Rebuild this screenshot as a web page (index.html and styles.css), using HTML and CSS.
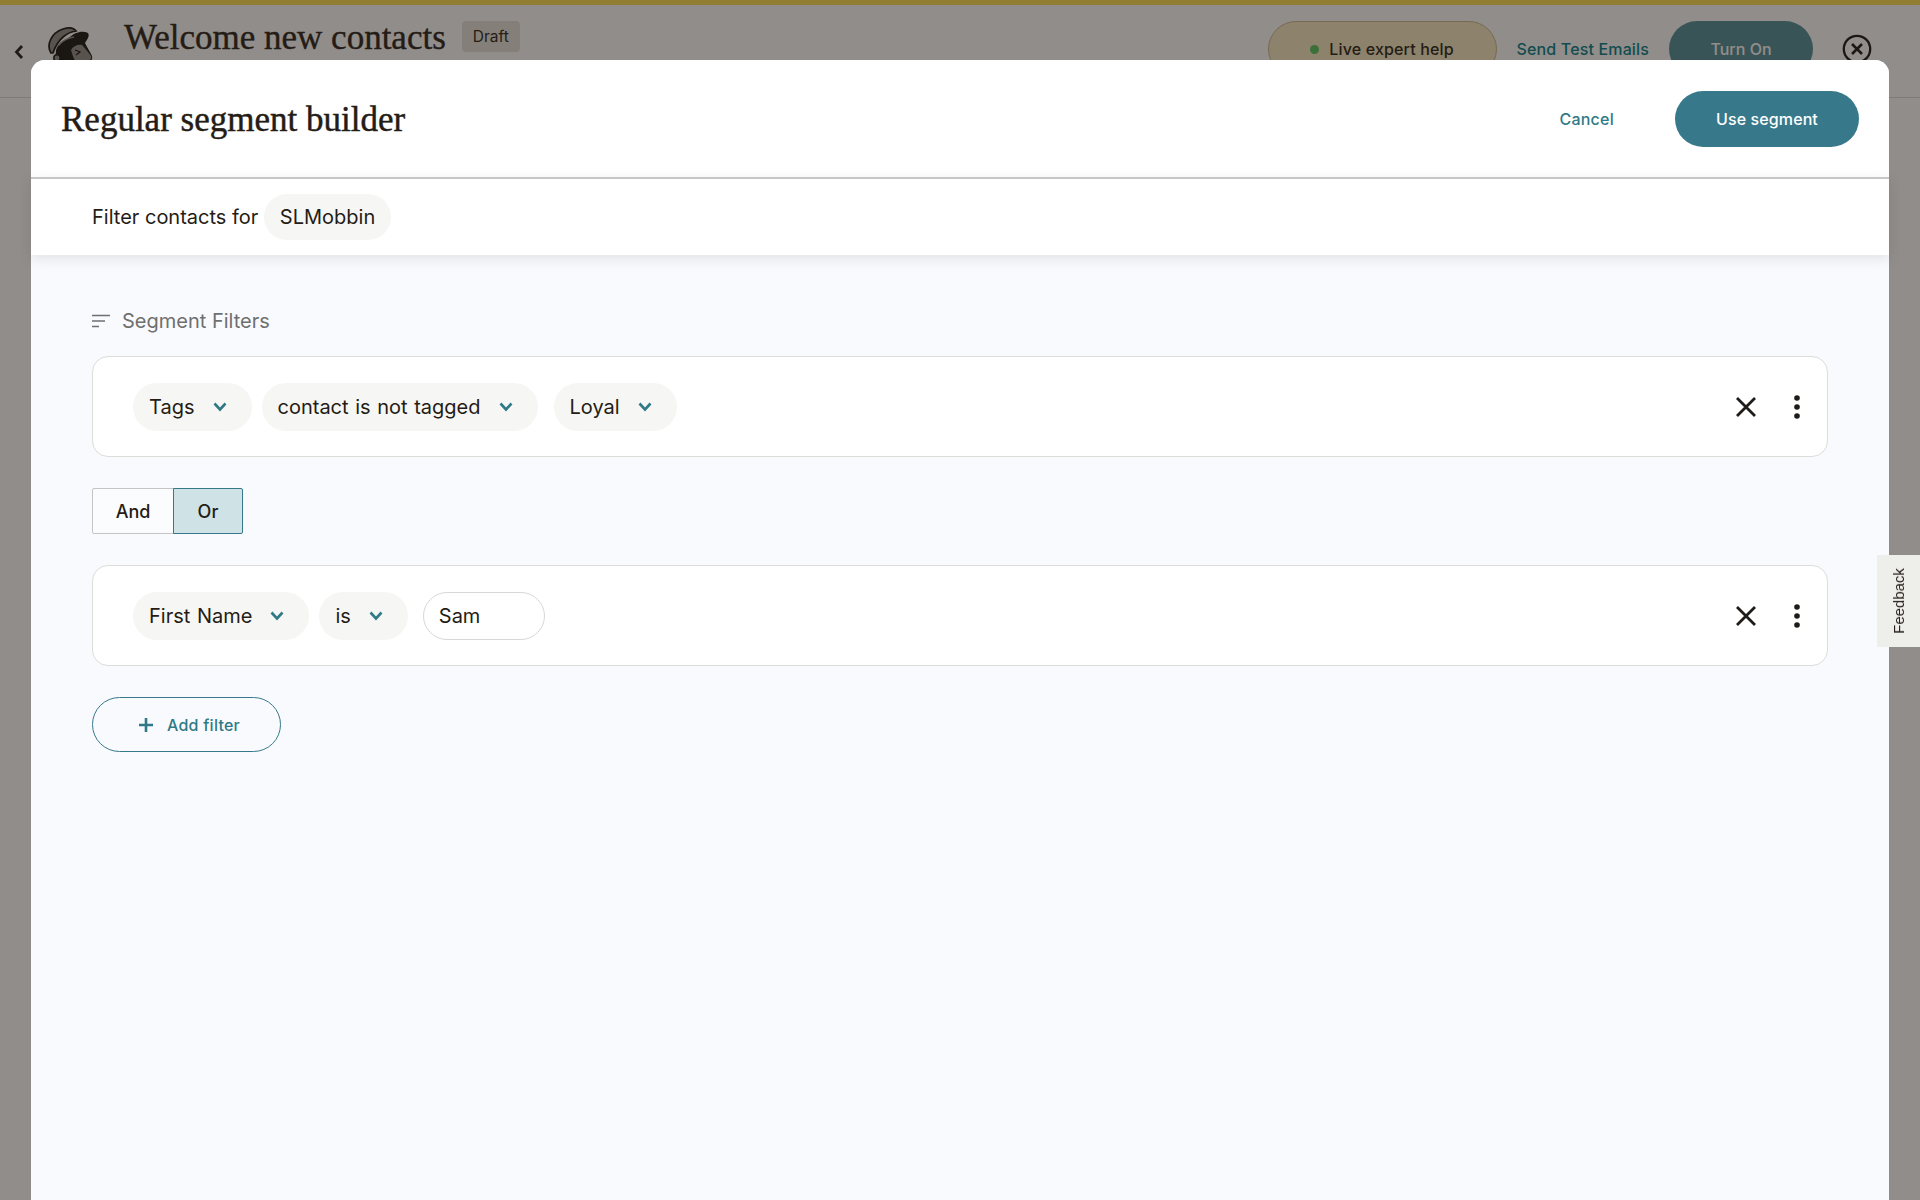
FILE: index.html
```html
<!DOCTYPE html>
<html lang="en">
<head>
<meta charset="utf-8">
<title>Regular segment builder</title>
<link rel="stylesheet" href="styles.css">
</head>
<body>
<div class="page">
  <div class="accent"></div>
  <header class="topbar">
    <svg class="back" viewBox="0 0 12 16" width="12" height="16"><path d="M9 2 3.500 8 9 14" fill="none" stroke="#1f1b18" stroke-width="2.800"/></svg>
    <svg class="logo" viewBox="46 26 48 36" width="48" height="36">
      <path d="M55 62 56 50C58 44 64 40 70 37 74 33 82 30 88 33 90 36 87 40 85 43 87 47 90 52 92 56 93 60 90 62 88 62Z" fill="#11100e"/>
      <path d="M51 53C46 45 51 33 63 29 69 27 74 28 76 31 68 32 58 38 53 53Z" fill="#8f8b87" stroke="#11100e" stroke-width="1.700"/>
      <path d="M59 45C63 40 68 38 74 37" fill="none" stroke="#8f8b87" stroke-width="1.500"/>
      <path d="M71 50C73 46 78 44 82 45 85 48 88 52 91 56 92 59 90 60 88 61L75 61C73 57 72 53 71 50Z" fill="#8f8b87"/>
      <path d="M75 50 80 52 76 55M84 53h.1M82 56h.1" fill="none" stroke="#11100e" stroke-width="1.300"/>
      <circle cx="57" cy="58" r="3.200" fill="#8f8b87" stroke="#11100e" stroke-width="1.500"/>
    </svg>
    <h2 class="campaign">Welcome new contacts</h2>
    <span class="draft">Draft</span>
    <div class="top-actions">
      <a class="expert"><i class="dot"></i>Live expert help</a>
      <a class="test">Send Test Emails</a>
      <a class="turn-on">Turn On</a>
      <svg class="close" viewBox="0 0 30 30" width="30" height="30"><circle cx="15" cy="15" r="13.200" fill="none" stroke="#15130f" stroke-width="2.300"/><path d="M10 10 20 20M20 10 10 20" stroke="#15130f" stroke-width="2.600"/></svg>
    </div>
  </header>
</div>

<div class="scrim">
  <section class="modal">
    <header class="modal-head">
      <h1 class="modal-title">Regular segment builder</h1>
      <div class="modal-actions">
        <a class="cancel">Cancel</a>
        <a class="primary">Use segment</a>
      </div>
    </header>
    <div class="subhead">
      <span>Filter contacts for</span>
      <span class="audience">SLMobbin</span>
    </div>
    <div class="builder">
      <div class="section-label">
        <svg viewBox="0 0 18 14" width="18" height="14"><path d="M0 1.500h18M0 7h13M0 12.500h7" stroke="#6f6f6f" stroke-width="1.500" fill="none"/></svg>
        <span>Segment Filters</span>
      </div>

      <div class="filter">
        <div class="chips">
          <span class="chip">Tags<svg class="chev" viewBox="0 0 14 10" width="14" height="10"><path d="M1.500 1.500 7 7.500l5.500-6" fill="none" stroke="#2f7a86" stroke-width="2.600"/></svg></span>
          <span class="chip">contact is not tagged<svg class="chev" viewBox="0 0 14 10" width="14" height="10"><path d="M1.500 1.500 7 7.500l5.500-6" fill="none" stroke="#2f7a86" stroke-width="2.600"/></svg></span>
          <span class="chip chip-far">Loyal<svg class="chev" viewBox="0 0 14 10" width="14" height="10"><path d="M1.500 1.500 7 7.500l5.500-6" fill="none" stroke="#2f7a86" stroke-width="2.600"/></svg></span>
        </div>
        <div class="row-tools">
          <svg viewBox="0 0 22 22" width="22" height="22"><path d="M2 2 20 20M20 2 2 20" stroke="#1f1b18" stroke-width="2.800"/></svg>
          <svg class="dots" viewBox="0 0 6 24" width="6" height="24"><circle cx="3" cy="3" r="2.800" fill="#1f1b18"/><circle cx="3" cy="12" r="2.800" fill="#1f1b18"/><circle cx="3" cy="21" r="2.800" fill="#1f1b18"/></svg>
        </div>
      </div>

      <div class="toggle">
        <span class="toggle-btn">And</span>
        <span class="toggle-btn is-on">Or</span>
      </div>

      <div class="filter">
        <div class="chips">
          <span class="chip">First Name<svg class="chev" viewBox="0 0 14 10" width="14" height="10"><path d="M1.500 1.500 7 7.500l5.500-6" fill="none" stroke="#2f7a86" stroke-width="2.600"/></svg></span>
          <span class="chip">is<svg class="chev" viewBox="0 0 14 10" width="14" height="10"><path d="M1.500 1.500 7 7.500l5.500-6" fill="none" stroke="#2f7a86" stroke-width="2.600"/></svg></span>
          <span class="value">Sam</span>
        </div>
        <div class="row-tools">
          <svg viewBox="0 0 22 22" width="22" height="22"><path d="M2 2 20 20M20 2 2 20" stroke="#1f1b18" stroke-width="2.800"/></svg>
          <svg class="dots" viewBox="0 0 6 24" width="6" height="24"><circle cx="3" cy="3" r="2.800" fill="#1f1b18"/><circle cx="3" cy="12" r="2.800" fill="#1f1b18"/><circle cx="3" cy="21" r="2.800" fill="#1f1b18"/></svg>
        </div>
      </div>

      <a class="add"><svg viewBox="0 0 14 14" width="14" height="14"><path d="M7 0v14M0 7h14" stroke="#2f7a86" stroke-width="2.600"/></svg>Add filter</a>
    </div>
  </section>
</div>
<a class="feedback"><span>Feedback</span></a>
</body>
</html>
```

FILE: styles.css
```css
* { box-sizing: border-box; }
html, body { margin: 0; height: 1200px; overflow: hidden; }
body { font-family: Inter, "Liberation Sans", sans-serif; background: #fff; color: #241c15; }

.accent { height: 5px; background: #ffe050; }
.topbar { position: relative; height: 93px; display: flex; align-items: flex-start; border-bottom: 1px solid #d8d8d8; padding-left: 13px; }
.back { margin-top: 39px; }
.logo { margin: 21px 0 0 21px; }
.campaign { font: 400 35px/1 "Liberation Serif", serif; margin: 15px 0 0 30px; -webkit-text-stroke: .4px #241c15; }
.draft { margin: 16px 0 0 16px; background: #e6e3df; border-radius: 4px; height: 31px; width: 58px; font-size: 15.500px; line-height: 31px; text-align: center; }
.top-actions { margin-left: auto; display: flex; align-items: flex-start; padding-right: 48px; }
.expert { margin: 16px 0 0; width: 229px; height: 56px; border-radius: 28px; border: 1px solid #c8b78a; background: #f6e9c0; display: flex; align-items: center; justify-content: center; gap: 10px; font-size: 16px; font-weight: 500; letter-spacing: .15px; }
.dot { width: 9px; height: 9px; border-radius: 50%; background: #57c25d; }
.test { margin: 16px 0 0 20px; height: 56px; line-height: 56px; font-size: 16px; font-weight: 500; letter-spacing: .15px; color: #007c89; }
.turn-on { margin: 16px 0 0 20px; width: 144px; height: 56px; border-radius: 28px; color: #fff; text-align: center; line-height: 56px; font-size: 16px; font-weight: 500; background: #4f8c96; }
.close { margin: 29px 0 0 29px; }

.scrim { position: fixed; inset: 0; background: rgba(36, 28, 21, .5); display: flex; flex-direction: column; padding: 60px 31px 0; }
.modal { flex: 1; display: flex; flex-direction: column; background: #f9fafe; border-radius: 14px 14px 0 0; }
.modal-head { height: 117px; flex: none; display: flex; align-items: center; justify-content: space-between; padding: 0 30px; background: #fff; border-radius: 14px 14px 0 0; }
.modal-title { margin: 2px 0 0; font: 400 35px/1 "Liberation Serif", serif; -webkit-text-stroke: .45px #241c15; }
.modal-actions { display: flex; align-items: center; gap: 61px; }
.cancel { font-size: 16px; font-weight: 500; letter-spacing: .25px; color: #2f7a86; }
.primary { width: 184px; height: 56px; border-radius: 28px; background: #37798a; color: #fff; font-size: 16px; font-weight: 500; letter-spacing: .1px; line-height: 56px; text-align: center; }

.subhead { height: 78px; flex: none; display: flex; align-items: center; gap: 6px; padding-left: 61px; background: #fff; border-top: 2px solid #c6c6c6; font-size: 20px; box-shadow: 0 4px 12px rgba(36, 28, 21, .1); }
.audience { height: 46px; line-height: 46px; padding: 0 15.500px; border-radius: 23px; background: #f6f6f4; }

.builder { padding: 54px 61px 0; display: flex; flex-direction: column; align-items: flex-start; }
.section-label { height: 24px; display: flex; align-items: center; gap: 12px; font-size: 20px; color: #6f6f6f; margin-bottom: 23px; }
.filter { width: 100%; height: 101px; flex: none; display: flex; align-items: center; justify-content: space-between; padding: 1px 27px 0 40px; background: #fff; border: 1px solid #dcdcd9; border-radius: 16px; }
.chips { display: flex; gap: 10px; word-spacing: 1px; }
.chip { height: 48px; display: flex; align-items: center; gap: 18px; padding: 0 25px 0 16px; border-radius: 24px; background: #f6f6f4; font-size: 20px; }
.chip-far { margin-left: 6px; }
.chev { flex: none; }
.value { height: 48px; width: 122px; margin-left: 5px; display: flex; align-items: center; padding-left: 15px; border: 1px solid #d9d8d5; border-radius: 24px; font-size: 20px; background: #fff; }
.row-tools { display: flex; align-items: center; gap: 37px; }
.toggle { display: flex; margin: 31px 0; }
.toggle-btn { height: 46px; line-height: 46px; width: 82px; text-align: center; border: 1px solid #c4c4c4; background: #fbfcfe; font-size: 18px; font-weight: 500; border-radius: 2px 0 0 2px; }
.toggle-btn.is-on { width: 70px; margin-left: -1px; border-color: #37798a; background: #cfe3e6; border-radius: 0 2px 2px 0; }
.add { margin-top: 31px; width: 189px; height: 55px; display: flex; align-items: center; justify-content: center; gap: 14px; padding-left: 6px; border: 1px solid #37798a; border-radius: 28px; font-size: 16px; font-weight: 500; letter-spacing: .25px; color: #2f7a86; }

.feedback { position: fixed; left: 1877px; top: 555px; width: 43px; height: 92px; background: #eeeeeb; display: flex; align-items: center; justify-content: center; }
.feedback span { writing-mode: vertical-rl; transform: rotate(180deg); font: 15px "Liberation Sans", sans-serif; color: #241c15; }
```
